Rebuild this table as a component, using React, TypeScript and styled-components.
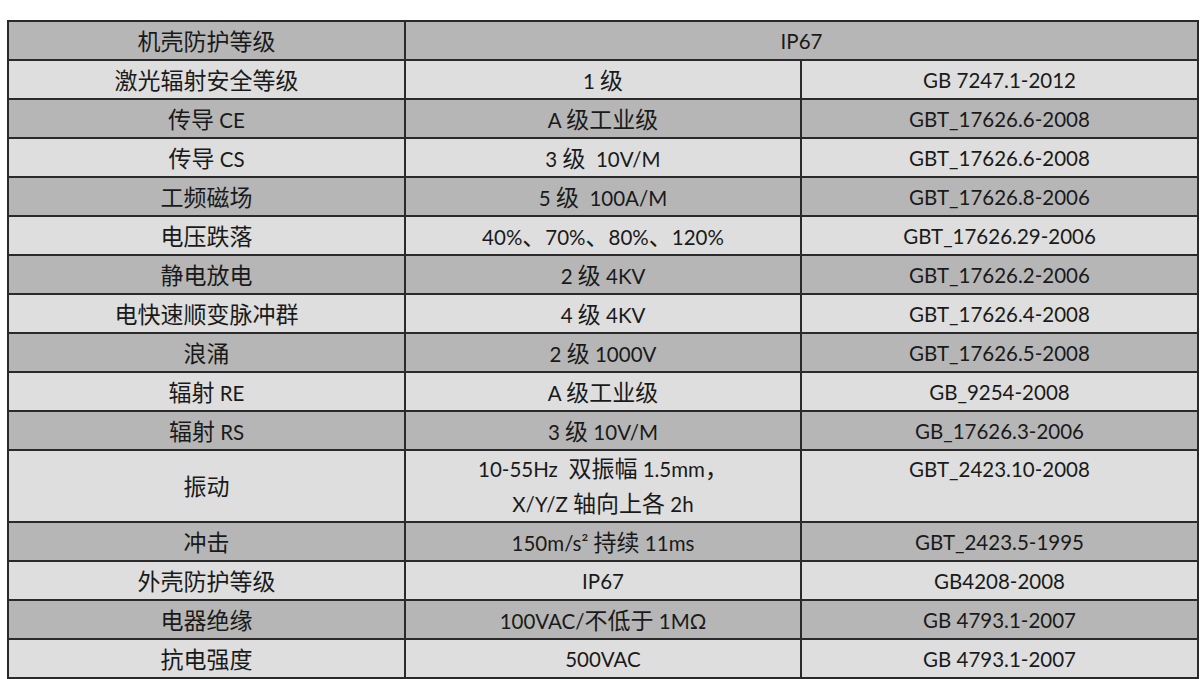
import { Fragment, ReactNode } from 'react';
import styled, { createGlobalStyle } from 'styled-components';

const GlobalStyle = createGlobalStyle`
  html, body {
    margin: 0;
    padding: 0;
    background: #ffffff;
  }
  body {
    font-family: 'Lato', 'Noto Sans CJK SC', sans-serif;
    color: #1a1a1a;
  }
`;

const S = {
  Page: styled.div`
    padding: 20px 0 0 7px;
  `,

  Table: styled.table`
    width: 1190px;
    border-collapse: collapse;
    table-layout: fixed;
    border: 2px solid #3a3a3a;
  `,

  Row: styled.tr<{ $shade: boolean; $tall?: boolean }>`
    height: ${({ $tall }) => ($tall ? '70px' : '39px')};
    background-color: ${({ $shade }) => ($shade ? '#b6b6b6' : '#dedede')};
  `,

  Cell: styled.td<{ $top?: boolean }>`
    border: 2px solid #2a2a2a;
    padding: ${({ $top }) => ($top ? '5px 4px 0' : '0 4px')};
    text-align: center;
    vertical-align: ${({ $top }) => ($top ? 'top' : 'middle')};
    font-size: 20.5px;
    line-height: 26px;
    white-space: pre;
  `,

  Lines: styled.div`
    line-height: 33px;
  `,

  Han: styled.span`
    font-family: 'Noto Sans CJK SC', sans-serif;
    font-size: 23px;
    font-weight: 400;
  `,
};

const HAN = /([\u3000-\u303f\u4e00-\u9fff\uff00-\uffef]+)/;

// wrap CJK runs so they get their own face and size
const Txt = ({ children }: { children: string }) => (
  <>
    {children.split(HAN).map((p, i) =>
      i % 2 === 1 ? <S.Han key={i}>{p}</S.Han> : <Fragment key={i}>{p}</Fragment>,
    )}
  </>
);

type RowData = { name: string; level: ReactNode; std: string; tall?: boolean };

const rows: RowData[] = [
  { name: '激光辐射安全等级', level: '1 级', std: 'GB 7247.1-2012' },
  { name: '传导 CE', level: 'A 级工业级', std: 'GBT_17626.6-2008' },
  { name: '传导 CS', level: '3 级  10V/M', std: 'GBT_17626.6-2008' },
  { name: '工频磁场', level: '5 级  100A/M', std: 'GBT_17626.8-2006' },
  { name: '电压跌落', level: '40%、70%、80%、120%', std: 'GBT_17626.29-2006' },
  { name: '静电放电', level: '2 级 4KV', std: 'GBT_17626.2-2006' },
  { name: '电快速顺变脉冲群', level: '4 级 4KV', std: 'GBT_17626.4-2008' },
  { name: '浪涌', level: '2 级 1000V', std: 'GBT_17626.5-2008' },
  { name: '辐射 RE', level: 'A 级工业级', std: 'GB_9254-2008' },
  { name: '辐射 RS', level: '3 级 10V/M', std: 'GB_17626.3-2006' },
  {
    name: '振动',
    level: (
      <S.Lines>
        <Txt>{'10-55Hz  双振幅 1.5mm，'}</Txt>
        <br />
        <Txt>{'X/Y/Z 轴向上各 2h'}</Txt>
      </S.Lines>
    ),
    std: 'GBT_2423.10-2008',
    tall: true,
  },
  { name: '冲击', level: '150m/s² 持续 11ms', std: 'GBT_2423.5-1995' },
  { name: '外壳防护等级', level: 'IP67', std: 'GB4208-2008' },
  { name: '电器绝缘', level: '100VAC/不低于 1MΩ', std: 'GB 4793.1-2007' },
  { name: '抗电强度', level: '500VAC', std: 'GB 4793.1-2007' },
];

const App = () => (
  <S.Page>
    <GlobalStyle />
    <S.Table>
      <colgroup>
        <col style={{ width: 397 }} />
        <col style={{ width: 396 }} />
        <col style={{ width: 397 }} />
      </colgroup>
      <tbody>
        <S.Row $shade>
          <S.Cell>
            <Txt>机壳防护等级</Txt>
          </S.Cell>
          <S.Cell colSpan={2}>IP67</S.Cell>
        </S.Row>
        {rows.map((r, i) => (
          <S.Row key={r.name} $shade={i % 2 === 1} $tall={r.tall}>
            <S.Cell>
              <Txt>{r.name}</Txt>
            </S.Cell>
            <S.Cell>{typeof r.level === 'string' ? <Txt>{r.level}</Txt> : r.level}</S.Cell>
            <S.Cell $top={r.tall}>{r.std}</S.Cell>
          </S.Row>
        ))}
      </tbody>
    </S.Table>
  </S.Page>
);

export default App;
